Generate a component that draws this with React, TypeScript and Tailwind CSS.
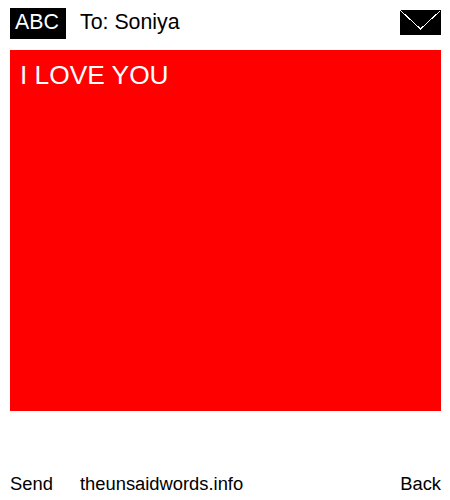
export default function App() {
  return (
    <div className="flex h-[500px] w-[450px] flex-col bg-white pl-[10px] pr-[9px] pt-2 font-['Liberation_Sans',Arial,sans-serif] text-black">
      <div className="flex h-[31px] items-center">
        <div className="flex h-[31px] w-14 items-center justify-center bg-black pr-[2px] pb-px text-[21.33px] text-white">ABC</div>
        <div className="ml-3.5 pb-px text-[21.33px]">To: Soniya</div>
        <svg className="mb-[3px] ml-auto" width="41" height="25" viewBox="0 0 41 25" shapeRendering="crispEdges">
          <rect width="41" height="25" fill="#000" />
          <path d="M0.5 0.5 L20.5 19 L40.5 0.5" fill="none" stroke="#fff" strokeWidth="1" />
        </svg>
      </div>
      <div className="mt-[11px] h-[361px] bg-[#ff0000] px-[10px] py-[9px] text-[26.3px] leading-[33px] text-white">I LOVE YOU</div>
      <div className="mt-[61px] flex items-center text-[18.35px] leading-[24px]">
        <span className="w-[42px]">Send</span>
        <span className="ml-7">theunsaidwords.info</span>
        <span className="ml-auto">Back</span>
      </div>
    </div>
  )
}
